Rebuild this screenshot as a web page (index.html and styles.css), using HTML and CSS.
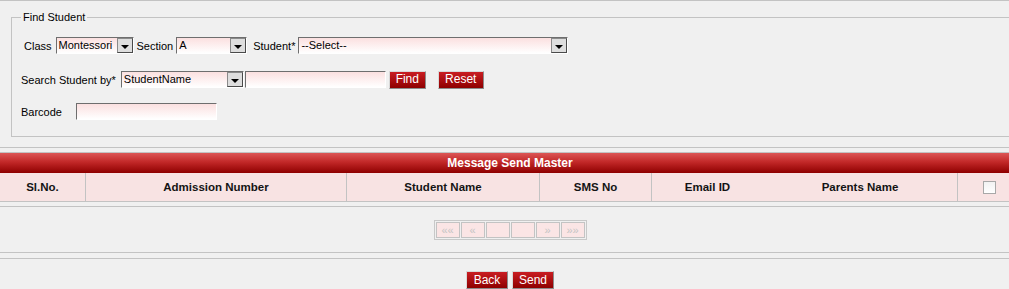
FILE: index.html
```html
<!DOCTYPE html>
<html>
<head>
  <meta charset="UTF-8">
  <title>Message Send Master</title>
  <link rel="stylesheet" href="styles.css">
</head>
<body>
<div class="page">

  <fieldset class="find">
    <legend>Find Student</legend>

    <div class="row row-first">
      <span class="lbl">Class</span>
      <span class="combo combo-class"><span class="val">Montessori</span><span class="arrow"></span></span>
      <span class="lbl lbl-section">Section</span>
      <span class="combo combo-section"><span class="val">A</span><span class="arrow"></span></span>
      <span class="lbl lbl-student">Student*</span>
      <span class="combo combo-student"><span class="val">--Select--</span><span class="arrow"></span></span>
    </div>

    <div class="row row-search">
      <span class="lbl">Search Student by*</span>
      <span class="combo combo-by"><span class="val">StudentName</span><span class="arrow"></span></span>
      <span class="text text-search"></span>
      <button class="btn btn-find">Find</button>
      <button class="btn btn-reset">Reset</button>
    </div>

    <div class="row row-barcode">
      <span class="lbl">Barcode</span>
      <span class="text text-barcode"></span>
    </div>
  </fieldset>

  <div class="rule rule-top"></div>

  <div class="grid">
    <div class="grid-title">Message Send Master</div>
    <div class="grid-head">
      <div class="cell">Sl.No.</div>
      <div class="cell">Admission Number</div>
      <div class="cell">Student Name</div>
      <div class="cell">SMS No</div>
      <div class="cell no-line">Email ID</div>
      <div class="cell">Parents Name</div>
      <div class="cell no-line"><span class="check"></span></div>
    </div>
  </div>

  <div class="rule rule-pager"></div>

  <div class="pager">
    <div class="pager-box">
      <span class="pg">&laquo;&laquo;</span>
      <span class="pg">&laquo;</span>
      <span class="pg"></span>
      <span class="pg"></span>
      <span class="pg">&raquo;</span>
      <span class="pg">&raquo;&raquo;</span>
    </div>
  </div>

  <div class="rule rule-low"></div>
  <div class="rule rule-last"></div>

  <div class="actions">
    <button class="btn">Back</button>
    <button class="btn">Send</button>
  </div>

</div>
</body>
</html>
```

FILE: styles.css
```css
body {
  margin: 0;
  background-color: #f0f0f0;
  font-family: "Liberation Sans", Arial, sans-serif;
  font-size: 11px;
  color: #000;
  overflow: hidden;
}

.page {
  width: 1020px;
  border-top: 1px solid #c3c3c3;
}

/* find student box */
.find {
  margin: 9px 10px 0 11px;
  padding: 13px 9px 16px 9px;
  border: 1px solid #c3c3c3;
}

.find legend {
  padding: 0 2px;
  line-height: 14px;
  font-size: 11px;
}

.row {
  display: flex;
  align-items: center;
  height: 17px;
}

.row-first {
  padding-left: 3px;
}

.row-search {
  margin-top: 17px;
}

.row-barcode {
  margin-top: 15px;
}

.lbl {
  white-space: nowrap;
}

.combo,
.text {
  display: inline-flex;
  box-sizing: border-box;
  height: 17px;
  border: 1px solid;
  border-color: #6e6e6e #ffffff #ffffff #6e6e6e;
  background: linear-gradient(#fbe0e0, #ffffff);
}

.combo .val {
  flex: 1;
  padding-left: 2px;
  line-height: 15px;
  white-space: nowrap;
  overflow: hidden;
}

.combo .arrow {
  display: flex;
  justify-content: center;
  align-items: flex-end;
  box-sizing: border-box;
  width: 16px;
  height: 15px;
  padding-bottom: 3px;
  border: 1px solid;
  border-color: #8a8a8a #4a4a4a #4a4a4a #8a8a8a;
  background: #dedede;
}

.combo .arrow::after {
  content: "";
  border-left: 4px solid transparent;
  border-right: 4px solid transparent;
  border-top: 4px solid #000;
}

.combo-class   { width: 78px; margin-left: 4px; }
.lbl-section   { margin-left: 3px; }
.combo-section { width: 71px; margin-left: 3px; }
.lbl-student   { margin-left: 6px; }
.combo-student { width: 270px; margin-left: 3px; }

.combo-by      { width: 123px; margin-left: 5px; }
.text-search   { width: 141px; margin-left: 1px; }
.btn-find      { margin-left: 3px; }
.btn-reset     { margin-left: 12px; }

.text-barcode  { width: 141px; margin-left: 14px; }

.btn {
  box-sizing: border-box;
  height: 18px;
  padding: 0 7px;
  border: 1px solid;
  border-color: #d8d8d8 #8c8c8c #8c8c8c #d8d8d8;
  background: linear-gradient(#c91d22, #8e0000);
  color: #fff;
  font-family: "Liberation Sans", Arial, sans-serif;
  font-size: 12px;
  line-height: 15px;
  cursor: pointer;
}

.btn-find {
  width: 37px;
  padding: 0;
}

.btn-reset {
  width: 46px;
  padding: 0;
}

/* rules */
.rule {
  border-top: 1px solid #c3c3c3;
}

.rule-top   { margin-top: 10px; }
.rule-pager { margin-top: 4px; }
.rule-low   { margin-top: 12px; }
.rule-last  { margin-top: 5px; }

/* grid */
.grid {
  margin-top: 4px;
  border-top: 1px solid #c3c3c3;
}

.grid-title {
  height: 20px;
  line-height: 20px;
  background: linear-gradient(#dc5656, #c22828 45%, #8e0000);
  color: #fff;
  font-size: 12px;
  font-weight: bold;
  text-align: center;
}

.grid-head {
  display: grid;
  grid-template-columns: 86px 261px 193px 112px 111px 195px 62px;
  height: 29px;
  background-color: #f8e3e3;
  border-bottom: 1px solid #c3c3c3;
  box-sizing: border-box;
}

.cell {
  display: flex;
  align-items: center;
  justify-content: center;
  border-right: 1px solid #c3c3c3;
  font-size: 11.5px;
  font-weight: bold;
  color: #141414;
}

.cell.no-line {
  border-right: none;
}

.check {
  box-sizing: border-box;
  width: 13px;
  height: 13px;
  border: 1px solid #a8a8a8;
  background: linear-gradient(#f2f2f2, #ffffff);
}

/* pager */
.pager {
  display: flex;
  justify-content: center;
  margin-top: 13px;
}

.pager-box {
  display: flex;
  gap: 1px;
  padding: 1px;
  border: 1px solid #c8c8c8;
}

.pg {
  box-sizing: border-box;
  width: 24px;
  height: 16px;
  border: 1px solid #c3c3c3;
  background-color: #fbe5e5;
  color: #c4c4c4;
  font-size: 11px;
  line-height: 14px;
  text-align: center;
}

/* bottom buttons */
.actions {
  display: flex;
  justify-content: center;
  gap: 4px;
  margin-top: 12px;
}

.actions .btn {
  width: 42px;
  padding: 0;
}
```
